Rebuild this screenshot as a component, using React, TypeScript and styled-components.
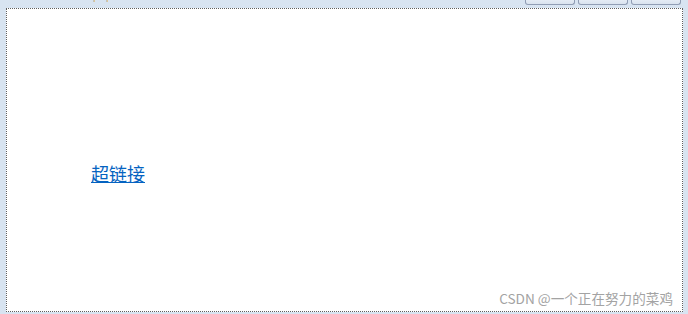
import React from 'react';
import styled, { createGlobalStyle } from 'styled-components';

const GlobalStyle = createGlobalStyle`
  html, body {
    margin: 0;
    padding: 0;
  }
  body {
    font-family: "Noto Sans CJK SC", "Noto Sans", sans-serif;
  }
`

const Frame = styled.div`
  width: 688px;
  height: 314px;
  background-color: #d8e4f1;
  display: flex;
  flex-direction: column;
  overflow: hidden;
`

const TopBar = styled.div`
  height: 8px;
  display: flex;
  justify-content: flex-end;
  align-items: flex-start;
  padding-right: 7px;
  gap: 3px;
  position: relative;
`

const TabButton = styled.div`
  width: 48px;
  height: 4px;
  border: 1px solid #909db4;
  border-top: none;
  border-radius: 0 0 3px 3px;
  background: linear-gradient(#e4ebf4, #dae3ee);
`

const Marks = styled.div`
  position: absolute;
  left: 93px;
  top: 0;
  display: flex;
  gap: 11px;
`

const Mark = styled.span`
  width: 2px;
  height: 2px;
  background: linear-gradient(90deg, #b7c0cc, #e6c98c);
`

const Panel = styled.div`
  position: relative;
  margin-left: 6px;
  width: 677px;
  height: 304px;
  border: 1px dotted #5f5f5f;
  background-color: #ffffff;
  padding: 151px 0 0 84px;
  box-sizing: border-box;
`

const Link = styled.a`
  font-family: "Noto Sans CJK SC", sans-serif;
  font-size: 18px;
  color: #0563c1;
  text-decoration: underline;
  text-underline-offset: 1px;
  cursor: pointer;
`

const Watermark = styled.span`
  position: absolute;
  right: 9px;
  bottom: 3px;
  font-family: "Noto Sans CJK SC", sans-serif;
  font-size: 13.6px;
  color: #a3a3a3;
`

const App: React.FC = () => {
  return (
    <Frame>
      <GlobalStyle />
      <TopBar>
        <Marks>
          <Mark />
          <Mark />
        </Marks>
        <TabButton />
        <TabButton />
        <TabButton />
      </TopBar>
      <Panel>
        <Link href='#'>超链接</Link>
        <Watermark>CSDN @一个正在努力的菜鸡</Watermark>
      </Panel>
    </Frame>
  );
}

export default App;
